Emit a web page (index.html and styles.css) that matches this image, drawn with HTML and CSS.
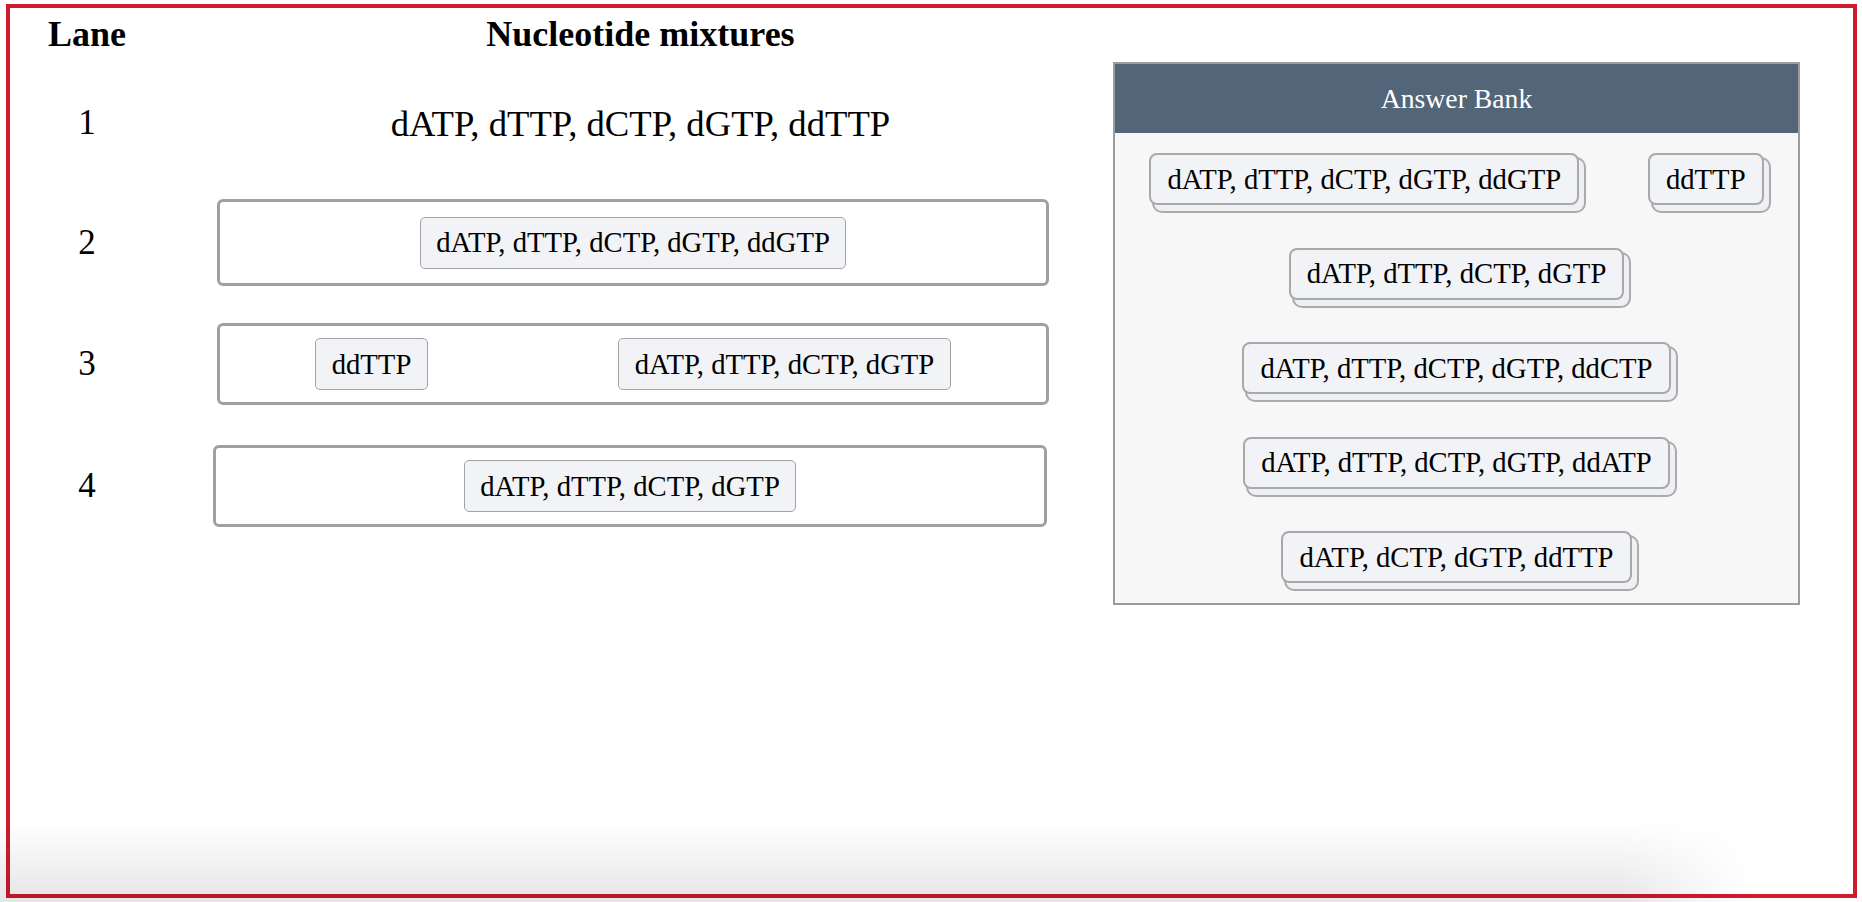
FILE: index.html
```html
<!DOCTYPE html>
<html>
<head>
  <meta charset="utf-8">
  <meta name="viewport" content="width=device-width, initial-scale=1">
  <title>Sequencing Lanes</title>
  <link rel="stylesheet" href="styles.css">
</head>
<body>
  <div class="frame">
    <div class="lanes">
      <div class="lane-row lane-head">
        <div class="lane-num">Lane</div>
        <div class="lane-mix">Nucleotide mixtures</div>
      </div>

      <div class="lane-row row-1">
        <div class="lane-num">1</div>
        <div class="lane-mix">dATP, dTTP, dCTP, dGTP, ddTTP</div>
      </div>

      <div class="lane-row row-2">
        <div class="lane-num">2</div>
        <div class="drop-zone tall">
          <div class="chip">dATP, dTTP, dCTP, dGTP, ddGTP</div>
        </div>
      </div>

      <div class="lane-row row-3">
        <div class="lane-num">3</div>
        <div class="drop-zone">
          <div class="chip">ddTTP</div>
          <div class="chip">dATP, dTTP, dCTP, dGTP</div>
        </div>
      </div>

      <div class="lane-row row-4">
        <div class="lane-num">4</div>
        <div class="drop-zone nudged">
          <div class="chip">dATP, dTTP, dCTP, dGTP</div>
        </div>
      </div>
    </div>

    <div class="answer-bank">
      <div class="bank-title">Answer Bank</div>
      <div class="bank-items">
        <div class="chip stacked">dATP, dTTP, dCTP, dGTP, ddGTP</div>
        <div class="chip stacked">ddTTP</div>
        <div class="chip stacked">dATP, dTTP, dCTP, dGTP</div>
        <div class="chip stacked">dATP, dTTP, dCTP, dGTP, ddCTP</div>
        <div class="chip stacked">dATP, dTTP, dCTP, dGTP, ddATP</div>
        <div class="chip stacked">dATP, dCTP, dGTP, ddTTP</div>
      </div>
    </div>
  </div>
</body>
</html>
```

FILE: styles.css
```css
html, body {
  margin: 0;
  padding: 0;
  background-color: white;
}
body {
  font-family: "Liberation Serif", "Times New Roman", serif;
  color: #000;
  height: 902px;
  overflow: hidden;
  position: relative;
}
/* soft grey shading along the bottom edge */
body::after {
  content: "";
  position: fixed;
  left: 0;
  bottom: 0;
  width: 100%;
  height: 80px;
  background: linear-gradient(to bottom, rgba(0,0,0,0), rgba(0,0,0,0.1));
  -webkit-mask-image: linear-gradient(to right, #000 87%, transparent 94%);
  mask-image: linear-gradient(to right, #000 87%, transparent 94%);
  pointer-events: none;
}
.frame {
  box-sizing: border-box;
  margin: 4px 5px 0 6px;
  height: 894px;
  border: 4px solid #cf1b2e;
  display: flex;
  align-items: flex-start;
}
.lanes {
  width: 1054px;
}
.lane-row {
  display: grid;
  grid-template-columns: 154px 847px;
  column-gap: 53px;
  align-items: center;
}
.lane-num {
  text-align: center;
  font-size: 35px;
}
.lane-mix {
  text-align: center;
  font-size: 36.7px;
}
.lane-head {
  height: 52px;
}
.lane-head .lane-num,
.lane-head .lane-mix {
  font-weight: bold;
  font-size: 36px;
}
.row-1 {
  margin-top: 33px;
  height: 60px;
}
.row-2 {
  margin-top: 46px;
}
.row-3 {
  margin-top: 37px;
}
.row-4 {
  margin-top: 40px;
}
.drop-zone {
  box-sizing: border-box;
  width: 832px;
  min-height: 82px;
  border: 3px solid #a0a0a0;
  border-radius: 6px;
  display: flex;
  justify-content: space-around;
  align-items: center;
}
.drop-zone.tall {
  min-height: 87px;
}
.drop-zone.nudged {
  margin-left: -4px;
  width: 834px;
}
.chip {
  font-size: 28.7px;
  line-height: 1.15;
  padding: 8.5px 15.5px;
  background-color: #f2f3f7;
  border: 1px solid #a3a3a3;
  border-radius: 5px;
  white-space: nowrap;
}
.answer-bank {
  box-sizing: border-box;
  width: 687px;
  margin-left: 49px;
  margin-top: 54px;
  border: 2px solid #9c9c9c;
  background-color: #f7f7f7;
}
.bank-title {
  background-color: #526579;
  color: white;
  font-size: 27.7px;
  text-align: center;
  height: 69px;
  line-height: 69px;
}
.bank-items {
  display: flex;
  flex-wrap: wrap;
  justify-content: space-around;
  row-gap: 42.5px;
  padding: 20px 0 20px;
}
.chip.stacked {
  padding: 7.5px 16px;
  border: 2px solid #a9a9a9;
  border-radius: 8px;
  box-shadow: 5px 6px 0 0 #eef0f4, 5px 6px 0 2px #ababab;
}
```
